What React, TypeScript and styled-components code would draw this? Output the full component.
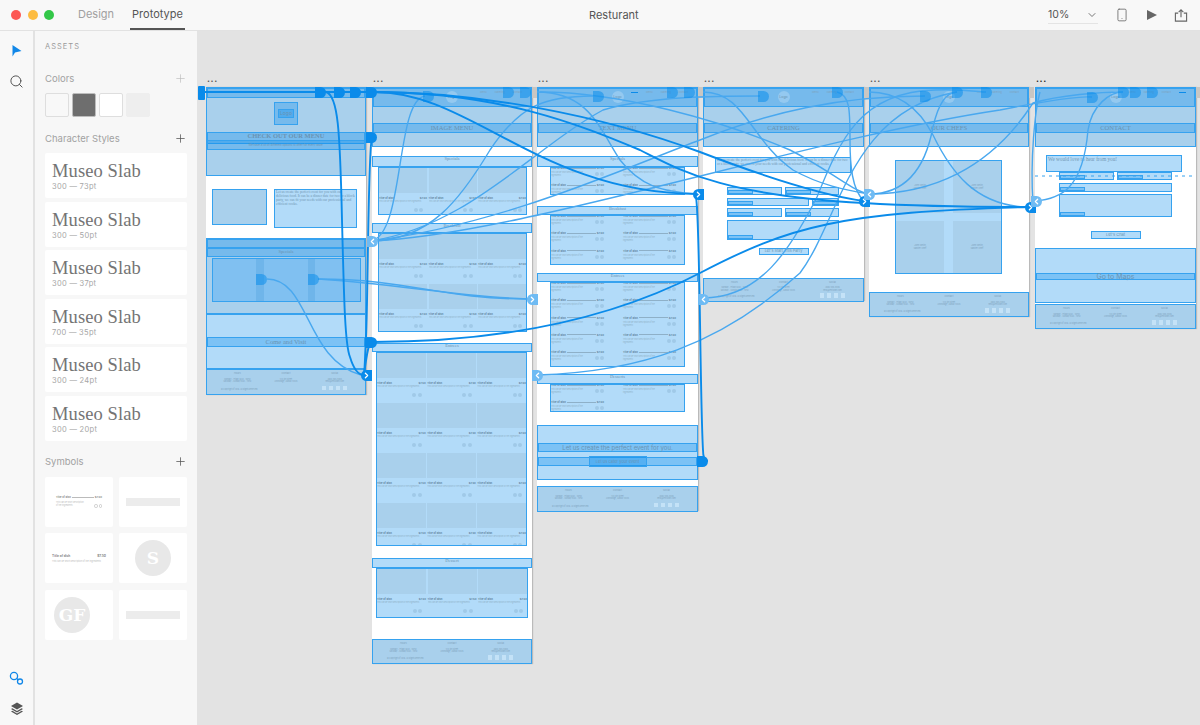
import React from 'react';
import styled, { createGlobalStyle } from 'styled-components';
import { ChevronDown, ChevronLeft, ChevronRight, Plus, Search, Smartphone } from 'lucide-react';

const UI_FONT = '"Inter", "Liberation Sans", sans-serif';
const SLAB_FONT = '"Liberation Serif", "DejaVu Serif", serif';
const WIRE_BLUE = '#0a8bea';
const ZONE_EDGE = '#36a2ef';
const CANVAS_LEFT = 197;
const CANVAS_TOP = 31;

const GlobalStyle = createGlobalStyle`
  html, body { margin: 0; padding: 0; height: 725px; overflow: hidden; background: #e3e3e3; }
  * { box-sizing: border-box; }
  #root { height: 725px; }
`;

/* ---------- app chrome ---------- */

const Window = styled.div`
  width: 1200px;
  height: 725px;
  display: flex;
  flex-direction: column;
  font-family: ${UI_FONT};
  overflow: hidden;
`;

const TopBar = styled.header`
  height: 31px;
  flex: none;
  display: grid;
  grid-template-columns: 589px auto 1fr;
  align-items: center;
  background: #f8f8f8;
  border-bottom: 1px solid #e2e2e2;
`;

const TitleLeft = styled.div`
  display: flex;
  align-items: center;
  height: 100%;
  padding-left: 11px;
`;

const Light = styled.span<{ $color: string }>`
  width: 10px;
  height: 10px;
  margin-right: 6.5px;
  border-radius: 50%;
  background: ${(p) => p.$color};
`;

const Tab = styled.div<{ $active?: boolean }>`
  height: 30px;
  display: flex;
  align-items: center;
  padding: 0 2px;
  margin-left: ${(p) => (p.$active ? '14px' : '15.5px')};
  font-size: 11px;
  color: ${(p) => (p.$active ? '#555' : '#a0a0a0')};
  border-bottom: 2px solid ${(p) => (p.$active ? '#555' : 'transparent')};
`;

const DocTitle = styled.div`
  font-size: 11px;
  color: #555;
`;

const TitleRight = styled.div`
  display: flex;
  align-items: center;
  justify-content: flex-end;
  height: 100%;
  padding-right: 12px;
  color: #666;
`;

const ZoomSelect = styled.div`
  width: 50px;
  height: 17px;
  margin-right: 1.5px;
  display: flex;
  align-items: center;
  justify-content: space-between;
  font-size: 10.5px;
  color: #555;
  border-bottom: 1px solid #e4e4e4;
`;

const IconSlot = styled.div`
  width: 14px;
  height: 16px;
  margin-left: 15.5px;
  display: flex;
  align-items: center;
  justify-content: center;
`;

const Body = styled.div`
  flex: 1;
  display: flex;
  min-height: 0;
`;

const ToolRail = styled.nav`
  width: 35px;
  flex: none;
  padding: 12px 0 9px;
  display: flex;
  flex-direction: column;
  align-items: center;
  background: #f8f8f8;
  border-right: 2px solid #e2e2e2;
`;

const ToolIcon = styled.div<{ $gap: number }>`
  width: 20px;
  height: 16px;
  margin-bottom: ${(p) => p.$gap}px;
  display: flex;
  align-items: center;
  justify-content: center;
  color: #555;
`;

const RailSpacer = styled.div`
  flex: 1;
`;

const Panel = styled.aside`
  width: 162px;
  flex: none;
  padding: 11px 10px 0;
  background: #f7f7f7;
`;

const PanelTitle = styled.div`
  height: 10px;
  line-height: 10px;
  font-size: 7.5px;
  letter-spacing: 1px;
  color: #9a9a9a;
`;

const SectionHead = styled.div<{ $top: number; $strong?: boolean }>`
  height: 14px;
  margin-top: ${(p) => p.$top}px;
  display: flex;
  align-items: center;
  justify-content: space-between;
  font-size: 9.5px;
  color: #a2a2a2;
  svg {
    color: ${(p) => (p.$strong ? '#555' : '#bbb')};
  }
`;

const Swatches = styled.div`
  margin-top: 8px;
  display: flex;
  gap: 3px;
`;

const Swatch = styled.div<{ $color: string; $edge: string }>`
  width: 24px;
  height: 24px;
  border-radius: 2px;
  background: ${(p) => p.$color};
  border: 1px solid ${(p) => p.$edge};
`;

const StyleList = styled.div`
  margin-top: 8px;
  display: flex;
  flex-direction: column;
  gap: 3.5px;
`;

const StyleCard = styled.div`
  height: 45px;
  padding: 8px 7px 0;
  background: #fff;
  border-radius: 2px;
`;

const StyleName = styled.div`
  font-family: ${SLAB_FONT};
  font-size: 18.5px;
  line-height: 21px;
  letter-spacing: 0.1px;
  color: #747474;
`;

const StyleMeta = styled.div`
  font-size: 7.5px;
  line-height: 10px;
  letter-spacing: 0.3px;
  color: #a6a6a6;
`;

const SymbolGrid = styled.div`
  margin-top: 8.5px;
  display: grid;
  grid-template-columns: 68px 68px;
  grid-auto-rows: 50px;
  column-gap: 6px;
  row-gap: 6.5px;
`;

const SymbolCard = styled.div`
  background: #fff;
  border-radius: 2px;
  display: flex;
  align-items: center;
  justify-content: center;
  overflow: hidden;
`;

const MiniDish = styled.div<{ $w: number }>`
  width: ${(p) => p.$w}px;
  color: #888;
`;

const MiniHead = styled.div<{ $size: number }>`
  display: flex;
  align-items: center;
  font-size: ${(p) => p.$size}px;
  font-weight: 700;
  line-height: 5px;
`;

const MiniLeader = styled.span<{ $line?: boolean }>`
  flex: 1;
  height: 1px;
  margin: 0 1px;
  background: ${(p) => (p.$line ? '#bbb' : 'transparent')};
`;

const MiniDesc = styled.div<{ $size: number; $w: number }>`
  width: ${(p) => p.$w}px;
  font-size: ${(p) => p.$size}px;
  line-height: 3px;
  color: #bbb;
  margin-top: 1px;
`;

const MiniDots = styled.div`
  display: flex;
  justify-content: flex-end;
  gap: 1px;
  margin-top: -3px;
`;

const MiniDot = styled.span`
  width: 3.5px;
  height: 3.5px;
  border: 0.5px solid #ccc;
  border-radius: 50%;
`;

const MiniBar = styled.div`
  width: 54px;
  height: 8px;
  background: #ececec;
`;

const MiniCircle = styled.div<{ $shift?: number }>`
  width: 36px;
  height: 36px;
  margin-left: ${(p) => p.$shift ?? 0}px;
  border-radius: 50%;
  background: #e8e8e8;
  color: #fff;
  font-family: "DejaVu Serif", serif;
  font-weight: 700;
  font-size: 17px;
  display: flex;
  align-items: center;
  justify-content: center;
`;

/* ---------- free canvas ---------- */

const Canvas = styled.main`
  position: relative;
  flex: 1;
  overflow: hidden;
  background: #e3e3e3;
`;

const Board = styled.section<{ $x: number; $w: number; $h: number }>`
  position: absolute;
  left: ${(p) => p.$x - CANVAS_LEFT}px;
  top: ${87 - CANVAS_TOP}px;
  width: ${(p) => p.$w}px;
  height: ${(p) => p.$h}px;
  display: flex;
  flex-direction: column;
  background: #fff;
  box-shadow: 1px 0 1px rgba(0, 0, 0, 0.18);
  &::after {
    content: '';
    position: absolute;
    left: 100%;
    top: 0;
    width: 5px;
    height: 11px;
    background: #c9c6c2;
  }
`;

const BoardMenu = styled.div<{ $x: number; $dark?: boolean }>`
  position: absolute;
  left: ${(p) => p.$x - CANVAS_LEFT + 1}px;
  top: 46px;
  font-size: 9px;
  line-height: 4px;
  letter-spacing: 0.6px;
  font-weight: 700;
  color: ${(p) => (p.$dark ? '#222' : '#555')};
`;

const TONES = {
  light: 'rgba(0, 137, 235, 0.3)',
  gray: '#a9d0ec',
  deep: '#80c0f1',
};

/* a prototype hotspot: the translucent blue box with an edge */
const Zone = styled.div<{
  $h: number;
  $w?: number;
  $mt?: number;
  $ml?: number;
  $mr?: number;
  $tone?: keyof typeof TONES;
  $clip?: boolean;
  $center?: boolean;
}>`
  position: relative;
  flex: ${(p) => (p.$w ? 'none' : '0 0 auto')};
  height: ${(p) => p.$h}px;
  ${(p) => (p.$w ? `width: ${p.$w}px;` : '')}
  margin-top: ${(p) => p.$mt ?? 0}px;
  margin-left: ${(p) => p.$ml ?? 0}px;
  margin-right: ${(p) => p.$mr ?? 0}px;
  ${(p) => (p.$center ? 'align-self: center;' : '')}
  background: ${(p) => TONES[p.$tone ?? 'light']};
  border: 1px solid ${ZONE_EDGE};
  overflow: ${(p) => (p.$clip ? 'hidden' : 'visible')};
`;

const ZoneLabel = styled.div<{ $size: number; $serif?: boolean; $bold?: boolean; $top?: boolean }>`
  height: 100%;
  display: flex;
  align-items: ${(p) => (p.$top ? 'flex-start' : 'center')};
  justify-content: center;
  font-family: ${(p) => (p.$serif ? SLAB_FONT : UI_FONT)};
  font-size: ${(p) => p.$size}px;
  font-weight: ${(p) => (p.$bold ? 700 : 400)};
  line-height: 1;
  white-space: nowrap;
  color: #6a93b2;
`;

const BoxText = styled.div<{ $size: number }>`
  padding: 1px;
  font-family: ${SLAB_FONT};
  font-size: ${(p) => p.$size}px;
  line-height: 1.1;
  color: #7196b2;
`;

const HeroNav = styled(Zone)`
  display: grid;
  grid-template-columns: 1fr auto 1fr;
  align-items: center;
`;

const LogoCircle = styled.div`
  width: 12px;
  height: 12px;
  margin-top: -2px;
  border-radius: 50%;
  background: rgba(255, 255, 255, 0.22);
  font-size: 3.5px;
  line-height: 12px;
  text-align: center;
  color: #6a93b2;
`;

const NavLinks = styled.div`
  display: flex;
  justify-content: flex-end;
  align-items: center;
  gap: 8px;
  height: 12px;
  margin-top: -10px;
  padding-right: 8px;
  font-size: 2.5px;
  color: #7ea2bd;
`;

const NavDash = styled.span`
  width: 7px;
  height: 1px;
  background: ${WIRE_BLUE};
`;

const LogoRow = styled.div`
  height: 34px;
  display: flex;
  justify-content: center;
  padding-top: 4px;
`;

const LogoBox = styled(Zone)`
  display: flex;
  align-items: center;
  justify-content: center;
`;

const BlockRow = styled.div`
  height: 62px;
  flex: none;
  display: flex;
  align-items: flex-start;
  gap: 7px;
  padding: 13px 0 0 6px;
`;

const Carousel = styled(Zone)`
  display: flex;
`;

const CarouselStrip = styled.div<{ $ml: number; $w: number }>`
  width: ${(p) => p.$w}px;
  margin-left: ${(p) => p.$ml}px;
  background: #6fb5ea;
`;

const BarButton = styled(Zone)`
  display: flex;
  align-items: center;
  justify-content: center;
`;

const ImageGrid = styled.div`
  display: grid;
  grid-template-columns: repeat(3, 1fr);
  column-gap: 1.5px;
`;

const DishCard = styled.article`
  height: 50px;
  min-width: 0;
`;

const DishImage = styled.div`
  height: 25px;
  background: #a9d0ec;
`;

const DishHead = styled.div`
  display: flex;
  justify-content: space-between;
  margin-top: 3px;
  font-size: 2.6px;
  line-height: 4px;
  font-weight: 700;
  color: #5f829c;
`;

const DishDesc = styled.div`
  font-size: 1.9px;
  line-height: 3px;
  color: #8eb0c8;
  white-space: nowrap;
  overflow: hidden;
`;

const DotRow = styled.div`
  display: flex;
  justify-content: flex-end;
  gap: 1.5px;
  margin-top: 5px;
  padding-right: 4px;
`;

const Dot = styled.span`
  width: 4px;
  height: 4px;
  border-radius: 50%;
  background: #a0c9e8;
`;

const TextGrid = styled.div`
  display: grid;
  grid-template-columns: 53px 53px;
  column-gap: 19px;
  margin-top: -2px;
`;

const TextDish = styled.article`
  height: 17.33px;
  position: relative;
`;

const TextHead = styled.div`
  display: flex;
  align-items: center;
  font-size: 2.6px;
  line-height: 4px;
  font-weight: 700;
  color: #5f829c;
`;

const Leader = styled.span`
  flex: 1;
  height: 1px;
  margin: 0 1px;
  background: #8eb0c8;
`;

const TextDesc = styled.div`
  width: 36px;
  margin-top: 1px;
  font-size: 1.9px;
  line-height: 3px;
  color: #8eb0c8;
`;

const FloatDots = styled.div`
  position: absolute;
  right: 0;
  top: 6px;
  display: flex;
  gap: 1.5px;
`;

const FooterGrid = styled.div`
  height: 100%;
  display: grid;
  grid-template-columns: repeat(3, 1fr);
  padding: 3px 6px;
  text-align: center;
  font-size: 1.9px;
  line-height: 2.6px;
  color: #7ea2bd;
`;

const FooterHead = styled.div`
  font-size: 2.4px;
  margin-bottom: 2px;
`;

const FooterCopy = styled.div`
  grid-column: 1 / span 2;
  text-align: left;
  padding-left: 8px;
  margin-top: 4px;
`;

const FooterSquares = styled.div`
  display: flex;
  justify-content: center;
  gap: 2.5px;
  margin-top: 2px;
`;

const FooterSquare = styled.span`
  width: 4.5px;
  height: 4.5px;
  background: #c4e2f7;
`;

const PhotoGrid = styled.div`
  display: grid;
  grid-template-columns: 48px 48px;
  grid-template-rows: 52px 52px;
  justify-content: space-between;
  align-content: space-between;
  height: 100%;
`;

const Photo = styled.div`
  background: #a9d0ec;
  display: flex;
  align-items: center;
  justify-content: center;
  text-align: center;
  font-size: 2.2px;
  line-height: 3px;
  color: #7ea2bd;
`;

const Form = styled.div<{ $mt: number; $ml: number; $mr: number }>`
  margin: ${(p) => p.$mt}px ${(p) => p.$mr}px 0 ${(p) => p.$ml}px;
  display: flex;
  flex-direction: column;
  gap: 2.5px;
`;

const FormRow = styled.div`
  display: flex;
  gap: 3px;
`;

const FieldBox = styled(Zone)<{ $grow: number }>`
  flex: ${(p) => p.$grow} 1 0;
  display: flex;
  align-items: flex-end;
`;

const FieldLabel = styled.div`
  width: 25px;
  height: 4px;
  background: rgba(0, 137, 235, 0.3);
  border: 1px solid ${ZONE_EDGE};
`;

const Dashes = styled.path`
  stroke: ${ZONE_EDGE};
  stroke-width: 1;
  stroke-dasharray: 3 4;
`;

const WireLayer = styled.svg`
  position: absolute;
  left: 0;
  top: 0;
  width: 1003px;
  height: 694px;
  pointer-events: none;
`;

const Handle = styled.div<{ $x: number; $y: number; $light?: boolean }>`
  position: absolute;
  left: ${(p) => p.$x - CANVAS_LEFT}px;
  top: ${(p) => p.$y - CANVAS_TOP - 5.5}px;
  width: 11px;
  height: 11px;
  border-radius: 0 6px 6px 0;
  background: ${(p) => (p.$light ? 'rgba(0, 137, 235, 0.5)' : WIRE_BLUE)};
`;

const StartTab = styled.div`
  position: absolute;
  left: 1px;
  top: 55px;
  width: 7px;
  height: 14px;
  border-radius: 1px;
  background: ${WIRE_BLUE};
`;

const Arrow = styled.div<{ $x: number; $y: number; $light?: boolean; $left?: boolean }>`
  position: absolute;
  left: ${(p) => p.$x - CANVAS_LEFT - 5.5}px;
  top: ${(p) => p.$y - CANVAS_TOP - 5.5}px;
  width: 11px;
  height: 11px;
  border-radius: ${(p) => (p.$left ? '0 6px 6px 0' : '6px 0 0 6px')};
  background: ${(p) => (p.$light ? '#6fbbf3' : WIRE_BLUE)};
  color: #fff;
  display: flex;
  align-items: center;
  justify-content: center;
`;

/* ---------- data ---------- */

const CHAR_STYLES = ['300 — 73pt', '300 — 50pt', '300 — 37pt', '700 — 35pt', '300 — 24pt', '300 — 20pt'];

const BOARD_MENUS = [206, 372, 537, 703, 869, 1035];

const DARK_WIRES = [
  'M202 92 L372 92',
  'M372 92 C470 90 540 194 698 194',
  'M372 92 C480 92 600 115 700 152 C760 175 820 195 864 201',
  'M372 92 C500 92 580 125 640 150 C680 170 720 195 864 203 C930 207 990 207 1030 207',
  'M372 342 C500 342 610 320 700 273 C790 226 840 212 1030 207',
  'M326 92 C338 95 340 130 342 220 C344 300 345 345 350 357 C353 367 358 375 364 375',
  'M372 137 C368 150 368 300 366 337 C365 355 365 365 364 375',
  'M372 342 C368 342 366 360 364 375',
  'M696 197 C700 220 700 400 703 450 C703 455 704 461 708 461',
];

const LIGHT_WIRES = [
  'M267 279 C310 279 305 360 361 375',
  'M318 279 C410 279 440 299 528 299',
  'M318 279 C400 284 450 296 528 299',
  'M371 241 C405 235 395 100 425 96',
  'M371 241 C430 240 460 200 490 150 C520 105 545 96 593 96',
  'M371 241 C470 225 530 150 603 110 C650 96 720 96 760 96',
  'M371 241 C500 225 620 170 700 140 C770 112 840 96 925 96',
  'M371 241 C520 235 800 140 1000 110 C1050 100 1080 96 1092 97',
  'M537 375 C640 372 720 345 800 273 C840 220 850 110 957 92',
  'M703 298 C760 298 790 250 817 197 C840 140 860 92 935 90 C965 89 980 92 986 92',
  'M869 194 C905 194 925 170 933 127 C938 105 945 92 957 92',
  'M869 194 C930 194 990 170 1033 103 C1060 95 1100 92 1123 92',
  'M703 92 C745 92 750 140 793 170 C820 185 845 190 869 194',
  'M537 92 C590 92 600 130 620 160 C640 185 660 192 698 194',
  'M837 92 C850 95 850 110 850 140 C850 165 852 190 864 201',
  'M869 92 C900 92 920 110 933 135 C950 170 975 207 1030 207',
  'M1035 201 C1060 199 1083 190 1088 130 C1092 105 1110 92 1123 92',
  'M1033 203 C1030 160 1035 110 1040 92',
  'M540 92 C620 92 720 120 790 150 C830 170 850 190 869 194',
];

const DARK_HANDLES = [
  [315, 92],
  [334, 92],
  [350, 92],
  [366, 92],
  [366, 137],
  [366, 342],
  [697, 461],
];

const LIGHT_HANDLES = [
  [256, 279],
  [308, 279],
  [423, 96],
  [503, 92],
  [520, 92],
  [593, 96],
  [667, 92],
  [684, 92],
  [758, 96],
  [832, 92],
  [920, 96],
  [952, 92],
  [981, 92],
  [1087, 97],
  [1118, 92],
  [1130, 92],
  [1147, 92],
];

const ARROWS = [
  { x: 366, y: 375 },
  { x: 698, y: 194 },
  { x: 864, y: 201 },
  { x: 1030, y: 207 },
  { x: 532, y: 299, light: true },
  { x: 372, y: 241, light: true, left: true },
  { x: 537, y: 375, light: true, left: true },
  { x: 703, y: 299, light: true, left: true },
  { x: 869, y: 194, light: true, left: true },
  { x: 1036, y: 201, light: true, left: true },
];

const ABOUT_TEXT =
  'Let us create the perfect event for you with our delicious food. It can be a dinner date for two or a block party, we can fit your needs with our professional and efficient cooks.';

/* ---------- small parts ---------- */

const Dish: React.FC = () => (
  <DishCard>
    <DishImage />
    <DishHead>
      <span>Title of dish</span>
      <span>$7.50</span>
    </DishHead>
    <DishDesc>This can be short description of the ingredients</DishDesc>
    <DotRow>
      <Dot />
      <Dot />
    </DotRow>
  </DishCard>
);

const DishZone: React.FC<{ h: number; count: number; ml: number; mr: number }> = ({ h, count, ml, mr }) => (
  <Zone $h={h} $ml={ml} $mr={mr} $clip>
    <ImageGrid>
      {Array.from({ length: count }, (_, i) => (
        <Dish key={i} />
      ))}
    </ImageGrid>
  </Zone>
);

const TextZone: React.FC<{ h: number; count: number }> = ({ h, count }) => (
  <Zone $h={h} $ml={13} $mr={13} $clip>
    <TextGrid>
      {Array.from({ length: count }, (_, i) => (
        <TextDish key={i}>
          <TextHead>
            <span>Title of dish</span>
            <Leader />
            <span>$7.50</span>
          </TextHead>
          <TextDesc>This can be short description of the ingredients</TextDesc>
          <FloatDots>
            <Dot />
            <Dot />
          </FloatDots>
        </TextDish>
      ))}
    </TextGrid>
  </Zone>
);

const SectionBar: React.FC<{ h: number; mt: number; label: string }> = ({ h, mt, label }) => (
  <Zone $h={h} $mt={mt}>
    <ZoneLabel $size={4.5} $serif $top>
      {label}
    </ZoneLabel>
  </Zone>
);

const Footer: React.FC<{ h: number; mt?: number }> = ({ h, mt }) => (
  <Zone $h={h} $mt={mt} $tone="gray" $clip>
    <FooterGrid>
      <div>
        <FooterHead>Hours</FooterHead>
        Monday - Friday 8AM - 10PM
        <br />
        Saturday - Sunday 9AM - 11PM
      </div>
      <div>
        <FooterHead>Contact</FooterHead>
        123 4th Street
        <br />
        Anchorage, Alaska 12345
      </div>
      <div>
        <FooterHead>Social</FooterHead>
        (800) 555-5555
        <br />
        hello@resturant.com
      </div>
      <FooterCopy>© Copyright of 2016. All Rights Reserved</FooterCopy>
      <FooterSquares>
        <FooterSquare />
        <FooterSquare />
        <FooterSquare />
        <FooterSquare />
      </FooterSquares>
    </FooterGrid>
  </Zone>
);

const Hero: React.FC<{ title: string; dash?: 'first' | 'last' }> = ({ title, dash }) => (
  <Zone $h={60} $tone="gray">
    <HeroNav $h={19}>
      <span />
      <LogoCircle>Logo</LogoCircle>
      <NavLinks>
        {dash === 'first' && <NavDash />}
        <span>Menu</span>
        <span>Catering</span>
        <span>Contact</span>
        {dash === 'last' && <NavDash />}
      </NavLinks>
    </HeroNav>
    <Zone $h={10} $mt={16}>
      <ZoneLabel $size={6.6} $serif>
        {title}
      </ZoneLabel>
    </Zone>
  </Zone>
);

const Field: React.FC<{ grow: number; h?: number }> = ({ grow, h = 8 }) => (
  <FieldBox $h={h} $grow={grow}>
    <FieldLabel />
  </FieldBox>
);

const Symbols: React.FC = () => (
  <SymbolGrid>
    <SymbolCard>
      <MiniDish $w={46}>
        <MiniHead $size={2.6}>
          <span>Title of dish</span>
          <MiniLeader $line />
          <span>$7.50</span>
        </MiniHead>
        <MiniDesc $size={2} $w={30}>
          This can be short description of the ingredients
        </MiniDesc>
        <MiniDots>
          <MiniDot />
          <MiniDot />
        </MiniDots>
      </MiniDish>
    </SymbolCard>
    <SymbolCard>
      <MiniBar />
    </SymbolCard>
    <SymbolCard>
      <MiniDish $w={54}>
        <MiniHead $size={3.2}>
          <span>Title of dish</span>
          <MiniLeader />
          <span>$7.50</span>
        </MiniHead>
        <MiniDesc $size={2.2} $w={54}>
          This can be short description of the ingredients
        </MiniDesc>
      </MiniDish>
    </SymbolCard>
    <SymbolCard>
      <MiniCircle>S</MiniCircle>
    </SymbolCard>
    <SymbolCard>
      <MiniCircle $shift={-14}>GF</MiniCircle>
    </SymbolCard>
    <SymbolCard>
      <MiniBar />
    </SymbolCard>
  </SymbolGrid>
);

const App: React.FC = () => {
  return (
    <Window>
      <GlobalStyle />
      <TopBar>
        <TitleLeft>
          <Light $color="#fc5753" />
          <Light $color="#fdbc40" />
          <Light $color="#33c748" />
          <Tab>Design</Tab>
          <Tab $active>Prototype</Tab>
        </TitleLeft>
        <DocTitle>Resturant</DocTitle>
        <TitleRight>
          <ZoomSelect>
            10%
            <ChevronDown size={12} strokeWidth={1.6} />
          </ZoomSelect>
          <IconSlot>
            <Smartphone size={16} strokeWidth={1.4} />
          </IconSlot>
          <IconSlot>
            <svg width="12" height="12" viewBox="0 0 12 12">
              <path d="M1 1 L11 6 L1 11 Z" fill="#666" />
            </svg>
          </IconSlot>
          <IconSlot>
            <svg width="15" height="15" viewBox="0 0 15 15" fill="none" stroke="#666" strokeWidth="1.2">
              <path d="M4.5 5 H1.5 V13.5 H13.5 V5 H10.5" />
              <path d="M7.5 9.5 V1.5 M5 3.8 L7.5 1.3 L10 3.8" />
            </svg>
          </IconSlot>
        </TitleRight>
      </TopBar>
      <Body>
        <ToolRail>
          <ToolIcon $gap={14}>
            <svg width="10" height="12" viewBox="0 0 10 12">
              <path d="M0.5 0 L9.5 6 L3 7.5 L0.5 11.5 Z" fill="#1187e8" />
            </svg>
          </ToolIcon>
          <ToolIcon $gap={0}>
            <Search size={15} strokeWidth={1.6} />
          </ToolIcon>
          <RailSpacer />
          <ToolIcon $gap={14}>
            <svg width="15" height="15" viewBox="0 0 15 15" fill="none" stroke="#1187e8" strokeWidth="1.3">
              <circle cx="5" cy="5" r="3.6" />
              <circle cx="11" cy="10.5" r="2.5" />
              <path d="M7.7 7.4 L9.2 8.8" />
            </svg>
          </ToolIcon>
          <ToolIcon $gap={0}>
            <svg width="14" height="13" viewBox="0 0 14 13">
              <path d="M7 0.5 L13 4 L7 7.5 L1 4 Z" fill="#555" />
              <path d="M1 7 L2.4 6.2 L7 8.9 L11.6 6.2 L13 7 L7 10.5 Z" fill="#555" />
              <path d="M1 9.5 L2.4 8.7 L7 11.4 L11.6 8.7 L13 9.5 L7 13 Z" fill="#555" />
            </svg>
          </ToolIcon>
        </ToolRail>
        <Panel>
          <PanelTitle>ASSETS</PanelTitle>
          <SectionHead $top={19}>
            Colors
            <Plus size={13} strokeWidth={1.2} />
          </SectionHead>
          <Swatches>
            <Swatch $color="#f8f8f8" $edge="#dedede" />
            <Swatch $color="#6e6e6e" $edge="#bdbdbd" />
            <Swatch $color="#ffffff" $edge="#dedede" />
            <Swatch $color="#eeeeee" $edge="#eeeeee" />
          </Swatches>
          <SectionHead $top={14} $strong>
            Character Styles
            <Plus size={13} strokeWidth={1.4} />
          </SectionHead>
          <StyleList>
            {CHAR_STYLES.map((meta) => (
              <StyleCard key={meta}>
                <StyleName>Museo Slab</StyleName>
                <StyleMeta>{meta}</StyleMeta>
              </StyleCard>
            ))}
          </StyleList>
          <SectionHead $top={13.5} $strong>
            Symbols
            <Plus size={13} strokeWidth={1.4} />
          </SectionHead>
          <Symbols />
        </Panel>
        <Canvas>
          {BOARD_MENUS.map((x, i) => (
            <BoardMenu key={x} $x={x} $dark={i === 5}>
              ...
            </BoardMenu>
          ))}

          <Board $x={206} $w={160} $h={308}>
            <Zone $h={89} $tone="gray">
              <Zone $h={10} />
              <LogoRow>
                <LogoBox $h={23} $w={24}>
                  <Zone $h={9} $w={16}>
                    <ZoneLabel $size={5}>Logo</ZoneLabel>
                  </Zone>
                </LogoBox>
              </LogoRow>
              <Zone $h={12}>
                <ZoneLabel $size={6.5} $serif $bold $top>
                  CHECK OUT OUR MENU
                </ZoneLabel>
              </Zone>
              <Zone $h={10} $mt={-4}>
                <ZoneLabel $size={2.8}>We have a lot of different options to offer for every taste.</ZoneLabel>
              </Zone>
            </Zone>
            <BlockRow>
              <Zone $h={36} $w={55} $tone="gray" />
              <Zone $h={39} $w={83}>
                <BoxText $size={3.5}>{ABOUT_TEXT}</BoxText>
              </Zone>
            </BlockRow>
            <Zone $h={76} $tone="gray">
              <Zone $h={9} />
              <Zone $h={9}>
                <ZoneLabel $size={4.5} $serif>
                  Specials
                </ZoneLabel>
              </Zone>
              <Carousel $h={44} $mt={1} $ml={5} $mr={4} $tone="deep">
                <CarouselStrip $ml={43} $w={8} />
                <CarouselStrip $ml={44} $w={7} />
              </Carousel>
            </Zone>
            <Zone $h={55}>
              <Zone $h={10} $mt={22}>
                <ZoneLabel $size={6.6} $serif>
                  Come and Visit
                </ZoneLabel>
              </Zone>
            </Zone>
            <Footer h={26} />
          </Board>

          <Board $x={372} $w={160} $h={577}>
            <Hero title="IMAGE MENU" />
            <SectionBar h={11} mt={9} label="Specials" />
            <DishZone h={48} count={3} ml={6} mr={5} />
            <SectionBar h={10} mt={8} label="Breakfast" />
            <DishZone h={99} count={6} ml={6} mr={5} />
            <SectionBar h={9} mt={11} label="Entrees" />
            <DishZone h={194} count={12} ml={4} mr={5} />
            <SectionBar h={10} mt={12} label="Dessert" />
            <DishZone h={50} count={3} ml={4} mr={4} />
            <Footer h={25} mt={21} />
          </Board>

          <Board $x={537} $w={161} $h={424}>
            <Hero title="TEXT MENU" dash="first" />
            <SectionBar h={11} mt={9} label="Specials" />
            <TextZone h={28} count={4} />
            <SectionBar h={9} mt={11} label="Breakfast" />
            <TextZone h={50} count={6} />
            <SectionBar h={9} mt={8} label="Entrees" />
            <TextZone h={85} count={10} />
            <SectionBar h={10} mt={7} label="Desserts" />
            <TextZone h={28} count={3} />
            <Zone $h={55} $mt={13}>
              <Zone $h={9} $mt={17}>
                <ZoneLabel $size={6}>Let us create the perfect event for you.</ZoneLabel>
              </Zone>
              <BarButton $h={9} $mt={5}>
                <BarButton $h={11} $w={58}>
                  <ZoneLabel $size={4}>Let us cater your event</ZoneLabel>
                </BarButton>
              </BarButton>
            </Zone>
            <Footer h={26} mt={6} />
          </Board>

          <Board $x={703} $w={161} $h={214}>
            <Hero title="CATERING" />
            <Zone $h={16} $mt={10} $ml={12} $mr={13}>
              <BoxText $size={3.5}>{ABOUT_TEXT}</BoxText>
            </Zone>
            <Form $mt={14} $ml={24} $mr={25}>
              <FormRow>
                <Field grow={55} />
                <Field grow={54} />
              </FormRow>
              <FormRow>
                <Field grow={83} />
                <Field grow={26} />
              </FormRow>
              <FormRow>
                <Field grow={55} h={9} />
                <Field grow={54} h={9} />
              </FormRow>
              <FormRow>
                <Field grow={1} h={20} />
              </FormRow>
            </Form>
            <Zone $h={7} $w={50} $mt={8} $center>
              <ZoneLabel $size={3.8}>Let's Start This Party</ZoneLabel>
            </Zone>
            <Footer h={24} mt={23} />
          </Board>

          <Board $x={869} $w={160} $h={230}>
            <Hero title="OUR CHEFS" />
            <Zone $h={114} $mt={13} $ml={26} $mr={27}>
              <PhotoGrid>
                <Photo>
                  John Smith
                  <br />
                  Master Chef
                </Photo>
                <Photo>
                  John Smith
                  <br />
                  Master Chef
                </Photo>
                <Photo>
                  John Smith
                  <br />
                  Master Chef
                </Photo>
                <Photo>
                  John Smith
                  <br />
                  Master Chef
                </Photo>
              </PhotoGrid>
            </Zone>
            <Footer h={25} mt={18} />
          </Board>

          <Board $x={1035} $w={161} $h={242}>
            <Hero title="CONTACT" dash="last" />
            <Zone $h={17} $mt={8} $ml={11} $mr={14}>
              <BoxText $size={5.2}>We would love to hear from you!</BoxText>
            </Zone>
            <Form $mt={0} $ml={24} $mr={24}>
              <FormRow>
                <Field grow={1} />
                <Field grow={1} />
              </FormRow>
              <FormRow>
                <Field grow={1} h={9} />
              </FormRow>
              <FormRow>
                <Field grow={1} h={23} />
              </FormRow>
            </Form>
            <Zone $h={8} $w={50} $mt={14} $center>
              <ZoneLabel $size={4}>Let's Chat</ZoneLabel>
            </Zone>
            <Zone $h={55} $mt={9}>
              <Zone $h={7} $mt={24}>
                <ZoneLabel $size={7}>Go to Maps</ZoneLabel>
              </Zone>
            </Zone>
            <Footer h={25} mt={1} />
          </Board>

          <WireLayer viewBox={`${CANVAS_LEFT} ${CANVAS_TOP} 1003 694`} fill="none">
            <Dashes d="M1035 176 H1196" />
            {LIGHT_WIRES.map((d) => (
              <path key={d} d={d} stroke="#49a8ef" strokeWidth="1.4" />
            ))}
            {DARK_WIRES.map((d) => (
              <path key={d} d={d} stroke={WIRE_BLUE} strokeWidth="1.9" />
            ))}
          </WireLayer>

          <StartTab />
          {LIGHT_HANDLES.map(([x, y]) => (
            <Handle key={`${x}-${y}`} $x={x} $y={y} $light />
          ))}
          {DARK_HANDLES.map(([x, y]) => (
            <Handle key={`${x}-${y}`} $x={x} $y={y} />
          ))}
          {ARROWS.map((a) => (
            <Arrow key={a.x} $x={a.x} $y={a.y} $light={a.light} $left={a.left}>
              {a.left ? (
                <ChevronLeft size={9} strokeWidth={3.4} />
              ) : (
                <ChevronRight size={9} strokeWidth={3.4} />
              )}
            </Arrow>
          ))}
        </Canvas>
      </Body>
    </Window>
  );
};

export default App;
